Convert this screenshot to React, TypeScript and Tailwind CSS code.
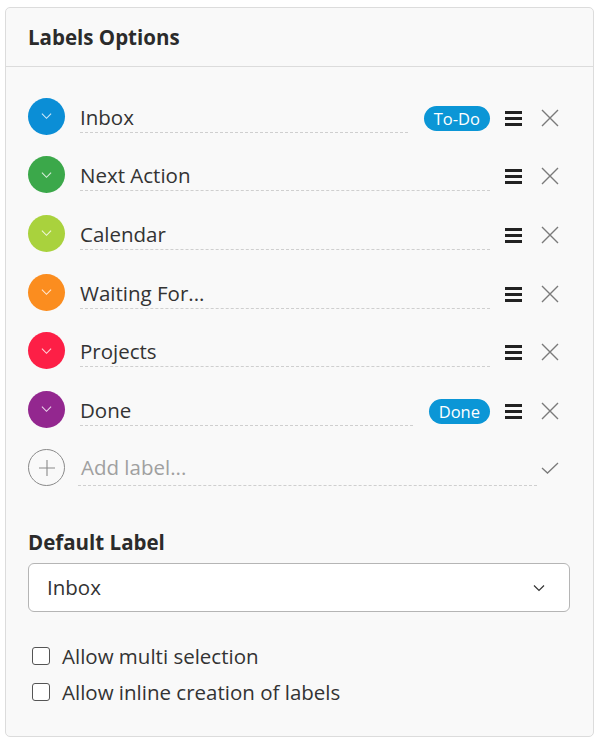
import React from "react";

const labels = [
  { name: "Inbox", color: "bg-[#0b8ed6]", badge: "To-Do" },
  { name: "Next Action", color: "bg-[#3ba84a]" },
  { name: "Calendar", color: "bg-[#a9d23d]" },
  { name: "Waiting For...", color: "bg-[#fb8d1f]" },
  { name: "Projects", color: "bg-[#fd1f46]" },
  { name: "Done", color: "bg-[#93278f]", badge: "Done" },
];

const Chevron = ({ className }: { className?: string }) => (
  <svg viewBox="0 0 12 8" className={className} fill="none">
    <path d="M1 1.5 L6 6.5 L11 1.5" stroke="currentColor" strokeWidth="1.2" />
  </svg>
);

const Cross = () => (
  <svg viewBox="0 0 18 18" className="w-[18px] h-[18px] text-[#7a7a7a]" fill="none">
    <path d="M1 1 L17 17 M17 1 L1 17" stroke="currentColor" strokeWidth="1.4" />
  </svg>
);

const Burger = () => (
  <div className="w-[17px] flex flex-col gap-[3px]">
    <div className="h-[3px] bg-[#222]" />
    <div className="h-[3px] bg-[#222]" />
    <div className="h-[3px] bg-[#222]" />
  </div>
);

export default function App() {
  return (
    <div
      className="bg-white pt-[7px] pl-[5px] w-[600px] h-[744px]"
      style={{ fontFamily: '"Open Sans", "Noto Sans", sans-serif' }}
    >
      <div className="w-[589px] h-[730px] bg-[#f9f9f9] border border-[#dcdcdc] rounded-[5px] flex flex-col text-[#333]">
        {/* Header */}
        <div className="h-[59px] flex items-center pl-[22px] border-b border-[#dcdcdc]">
          <div className="text-[20.5px] font-bold text-[#2b2b2b]">Labels Options</div>
        </div>

        {/* Labels */}
        <div className="pt-[20px] pl-[22px] pr-[34px]">
          {labels.map((l) => (
            <div key={l.name} className="h-[58.6px] flex items-center">
              <div className={`w-[37px] h-[37px] rounded-full ${l.color} flex items-center justify-center`}>
                <Chevron className="w-[11px] h-[8px] text-white/80" />
              </div>
              <div className="flex-1 ml-[15px] h-[31px] pt-[1px] border-b border-dashed border-[#cfcfcf] text-[20.5px] leading-[28px] mt-[2px]">
                {l.name}
              </div>
              {l.badge && (
                <div className="ml-4 mt-[4px] h-[25px] px-[10px] rounded-full bg-[#0b96d6] text-white text-[16.5px] leading-[25px]">
                  {l.badge}
                </div>
              )}
              <div className="ml-[15px] mt-[4px]">
                <Burger />
              </div>
              <div className="ml-[19px] mt-[3px]">
                <Cross />
              </div>
            </div>
          ))}
          <div className="h-[58.6px] flex items-center">
            <div className="w-[37px] h-[37px] rounded-full border border-[#8a8a8a] flex items-center justify-center">
              <svg viewBox="0 0 16 16" className="w-[16px] h-[16px] text-[#8a8a8a]" fill="none">
                <path d="M8 0 V16 M0 8 H16" stroke="currentColor" strokeWidth="1.1" />
              </svg>
            </div>
            <div className="flex-1 ml-[13px] pl-[3px] h-[33px] border-b border-dashed border-[#cfcfcf] text-[20.5px] leading-[28px] text-[#a0a0a0] mt-[4px]">
              Add label...
            </div>
            <div className="ml-[4px]">
              <svg viewBox="0 0 18 12" className="w-[18px] h-[12px] text-[#7a7a7a]" fill="none">
                <path d="M1 6 L6.5 11 L17 1" stroke="currentColor" strokeWidth="1.3" />
              </svg>
            </div>
          </div>
        </div>

        {/* Default label */}
        <div className="pl-[22px] pr-[23px] mt-[32px]">
          <div className="text-[20.5px] font-bold text-[#2b2b2b] leading-[26px]">Default Label</div>
          <div className="mt-[8px] h-[49px] bg-white border border-[#b5b5b5] rounded-[6px] flex items-center pl-[18px] pr-[24px]">
            <div className="flex-1 text-[20.5px]">Inbox</div>
            <Chevron className="w-[12px] h-[8px] text-[#333]" />
          </div>
        </div>

        {/* Options */}
        <div className="pl-[26px] mt-[33px] flex flex-col gap-[14px]">
          {["Allow multi selection", "Allow inline creation of labels"].map((t) => (
            <label key={t} className="flex items-center h-[22px]">
              <span className="w-[18px] h-[18px] border border-[#555] rounded-[3px] bg-white" />
              <span className="ml-[12px] text-[20.5px]">{t}</span>
            </label>
          ))}
        </div>
      </div>
    </div>
  );
}
